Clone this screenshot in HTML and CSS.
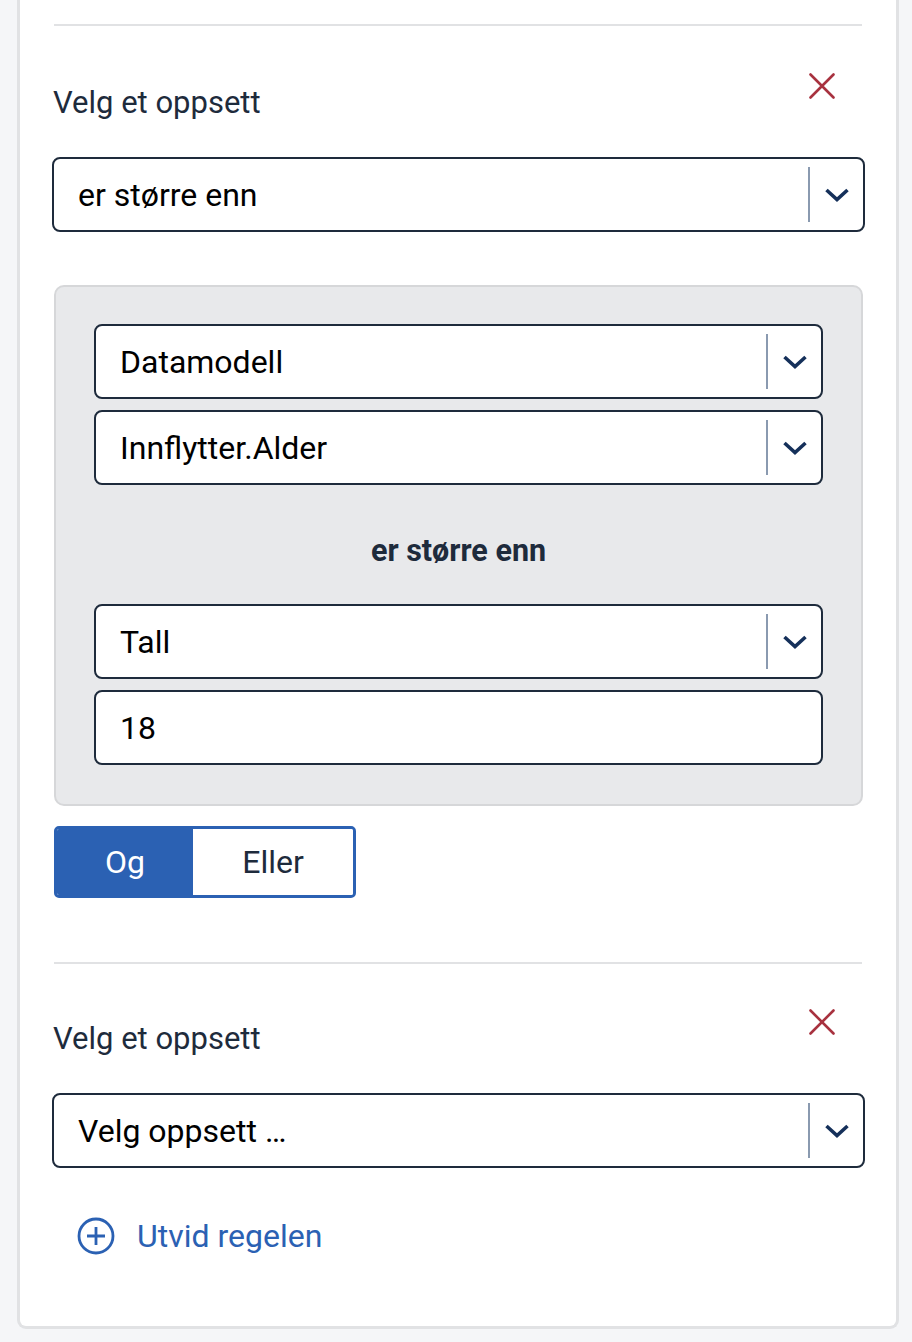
FILE: index.html
```html
<!DOCTYPE html>
<html lang="no">
<head>
<meta charset="utf-8">
<title>Regel</title>
<link rel="stylesheet" href="styles.css">
</head>
<body>
<div class="page">
  <div class="card">
    <section class="rule">
      <hr class="divider">
      <div class="rule-head">
        <label class="rule-label">Velg et oppsett</label>
        <button class="remove" aria-label="Fjern">
          <svg viewBox="0 0 26 26" width="26" height="26"><path d="M1.5 1.5 L24.5 24.5 M24.5 1.5 L1.5 24.5" stroke="#a8323f" stroke-width="2.6" fill="none" stroke-linecap="round"/></svg>
        </button>
      </div>
      <div class="select outer">
        <span class="select-value">er større enn</span>
        <span class="select-sep"></span>
        <span class="select-arrow"><svg viewBox="0 0 26 16" width="26" height="16"><path d="M2.5 3 L13 12.5 L23.5 3" stroke="#15305a" stroke-width="3.6" fill="none"/></svg></span>
      </div>
      <div class="condition">
        <div class="select">
          <span class="select-value">Datamodell</span>
          <span class="select-sep"></span>
          <span class="select-arrow"><svg viewBox="0 0 26 16" width="26" height="16"><path d="M2.5 3 L13 12.5 L23.5 3" stroke="#15305a" stroke-width="3.6" fill="none"/></svg></span>
        </div>
        <div class="select">
          <span class="select-value">Innflytter.Alder</span>
          <span class="select-sep"></span>
          <span class="select-arrow"><svg viewBox="0 0 26 16" width="26" height="16"><path d="M2.5 3 L13 12.5 L23.5 3" stroke="#15305a" stroke-width="3.6" fill="none"/></svg></span>
        </div>
        <div class="operator">er større enn</div>
        <div class="select">
          <span class="select-value">Tall</span>
          <span class="select-sep"></span>
          <span class="select-arrow"><svg viewBox="0 0 26 16" width="26" height="16"><path d="M2.5 3 L13 12.5 L23.5 3" stroke="#15305a" stroke-width="3.6" fill="none"/></svg></span>
        </div>
        <div class="input"><span class="select-value">18</span></div>
      </div>
      <div class="toggle">
        <button class="toggle-btn active">Og</button>
        <button class="toggle-btn">Eller</button>
      </div>
    </section>
    <section class="rule second">
      <hr class="divider">
      <div class="rule-head">
        <label class="rule-label">Velg et oppsett</label>
        <button class="remove" aria-label="Fjern">
          <svg viewBox="0 0 26 26" width="26" height="26"><path d="M1.5 1.5 L24.5 24.5 M24.5 1.5 L1.5 24.5" stroke="#a8323f" stroke-width="2.6" fill="none" stroke-linecap="round"/></svg>
        </button>
      </div>
      <div class="select outer">
        <span class="select-value">Velg oppsett …</span>
        <span class="select-sep"></span>
        <span class="select-arrow"><svg viewBox="0 0 26 16" width="26" height="16"><path d="M2.5 3 L13 12.5 L23.5 3" stroke="#15305a" stroke-width="3.6" fill="none"/></svg></span>
      </div>
    </section>
    <a class="expand" href="#">
      <svg viewBox="0 0 38 38" width="38" height="38"><circle cx="19" cy="19" r="17" stroke="#2b61b3" stroke-width="2.8" fill="none"/><path d="M19 10 V28 M10 19 H28" stroke="#2b61b3" stroke-width="2.8"/></svg>
      <span>Utvid regelen</span>
    </a>
  </div>
</div>
</body>
</html>
```

FILE: styles.css
```css
* { box-sizing: border-box; }
html, body { margin: 0; padding: 0; }
body {
  background: #f5f6f8;
  font-family: Roboto, "Liberation Sans", Arial, sans-serif;
  color: #1e2b3c;
}
.page {
  padding: 0 13px 12px 17px;
}
.card {
  background: #fff;
  border: 3px solid #e1e2e4;
  border-top: none;
  border-radius: 0 0 9px 9px;
  padding: 24px 32px 71px 33px;
}
.divider {
  border: none;
  height: 2px;
  background: #e1e2e4;
  margin: 0 2px 0 1px;
}
.rule-head {
  display: flex;
  justify-content: space-between;
  align-items: flex-start;
  margin-top: 47px;
}
.rule-label {
  font-size: 31px;
  line-height: 34px;
  margin-top: 13px;
  color: #1e2b3c;
}
.remove {
  border: none;
  background: none;
  padding: 0;
  width: 26px;
  height: 26px;
  margin-right: 29px;
  cursor: pointer;
}
.remove svg { display: block; }
.select, .input {
  display: flex;
  align-items: center;
  height: 75px;
  background: #fff;
  border: 2px solid #1e2b3c;
  border-radius: 8px;
  color: #000;
}
.select.outer {
  margin: 37px -1px 0 -1px;
}
.select-value {
  flex: 1;
  padding-left: 24px;
  font-size: 32px;
  line-height: 36px;
}
.select-sep {
  align-self: stretch;
  width: 2px;
  margin: 8px 0;
  background: #8a9ab0;
}
.select-arrow {
  width: 53px;
  display: flex;
  justify-content: center;
  align-items: center;
}
.select-arrow svg { display: block; margin-left: 1px; }
.condition {
  margin: 53px 1px 0 1px;
  background: #e8e9eb;
  border: 2px solid #d6d7d9;
  border-radius: 10px;
  padding: 37px 38px 39px 38px;
  display: flex;
  flex-direction: column;
  gap: 11px;
}
.operator {
  text-align: center;
  font-weight: 700;
  font-size: 30.5px;
  line-height: 36px;
  color: #1e2b3c;
  margin: 37px 0 24px;
}
.toggle {
  display: inline-flex;
  margin: 20px 0 0 1px;
  border: 3px solid #2b61b3;
  border-radius: 5px;
  overflow: hidden;
  height: 72px;
}
.toggle-btn {
  border: none;
  background: #fff;
  font-family: inherit;
  font-size: 32px;
  color: #1e2b3c;
  padding: 0;
  width: 160px;
  cursor: pointer;
}
.toggle-btn.active {
  background: #2b61b3;
  color: #fff;
  width: 136px;
}
.second {
  margin-top: 64px;
}
.second .rule-head { margin-top: 45px; }
.expand {
  display: flex;
  align-items: center;
  gap: 22px;
  margin: 49px 0 0 24px;
  color: #2b61b3;
  text-decoration: none;
  font-size: 32px;
  line-height: 38px;
}
.expand svg { display: block; }
```
